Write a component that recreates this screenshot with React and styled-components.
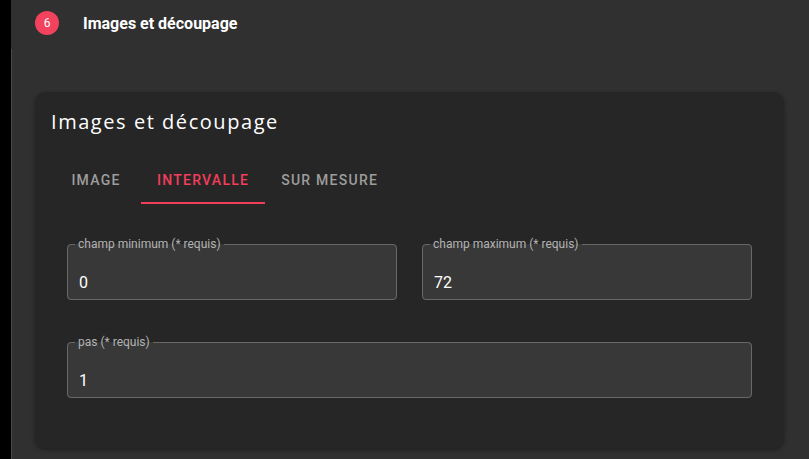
import React, { useState } from "react";
import styled, { createGlobalStyle } from "styled-components";

const GlobalStyle = createGlobalStyle`
    html, body {
        margin: 0;
        padding: 0;
        background: #303030;
        font-family: Roboto, "Liberation Sans", sans-serif;
    }
`;

// Styles
const Page = styled.div`
    display: flex;
    min-height: 459px;
`;
const Sidebar = styled.div`
    width: 11px;
    flex-shrink: 0;
    background: #000;
`;
const Main = styled.main`
    flex: 1;
    padding: 11px 25px 0 23px;
    border-left: 1px solid transparent;
    border-image: linear-gradient(to bottom, transparent 50px, #4a4a4a 50px) 1;
`;
const StepHeader = styled.div`
    display: flex;
    align-items: center;
    gap: 24px;
    margin-bottom: 57px;
`;
const Badge = styled.span`
    width: 24px;
    height: 24px;
    border-radius: 50%;
    background: #f2425d;
    color: #fff;
    font-size: 12px;
    display: flex;
    align-items: center;
    justify-content: center;
`;
const StepTitle = styled.span`
    color: #fff;
    font-size: 16px;
    font-weight: 700;
`;
const Card = styled.section`
    background: #262626;
    border-radius: 10px;
    padding: 16px;
    box-shadow: 0 2px 4px rgba(0, 0, 0, 0.35);
`;
const CardTitle = styled.h2`
    margin: 0 0 21px;
    color: #fff;
    font-family: "Open Sans", "Liberation Sans", sans-serif;
    font-weight: 500;
    font-size: 20px;
    line-height: 27px;
    letter-spacing: 1.55px;
`;
const TabList = styled.div`
    display: flex;
`;
const Tab = styled.button`
    min-width: 90px;
    height: 48px;
    padding: 0 16px;
    border: none;
    background: none;
    font-family: Roboto, "Liberation Sans", sans-serif;
    font-size: 14px;
    font-weight: 500;
    letter-spacing: 1.25px;
    text-transform: uppercase;
    color: ${p => (p.$active ? "#f23e5a" : "#9d9d9d")};
    border-bottom: 2px solid ${p => (p.$active ? "#f23e5a" : "transparent")};
    padding-top: 2px;
    cursor: pointer;
`;
const Panel = styled.div`
    display: grid;
    grid-template-columns: 1fr 1fr;
    column-gap: 25px;
    row-gap: 35px;
    padding: 33px 16px 34px;
`;
const Field = styled.fieldset`
    grid-column: ${p => (p.$wide ? "1 / -1" : "auto")};
    margin: 0;
    min-width: 0;
    padding: 0 11px;
    border: 1px solid #686868;
    border-radius: 4px;
    background: #383838;
`;
const Legend = styled.legend`
    margin-left: -4px;
    padding: 0 3px;
    font-size: 12px;
    line-height: 14px;
    color: #b3b3b3;
`;
const Value = styled.div`
    padding: 22px 0 7px;
    font-size: 16px;
    line-height: 19px;
    color: #fff;
`;

const tabs = ["Image", "Intervalle", "Sur mesure"];

const fields = [
    { label: "champ minimum (* requis)", value: "0" },
    { label: "champ maximum (* requis)", value: "72" },
    { label: "pas (* requis)", value: "1", wide: true },
];

function App() {
    const [tab, setTab] = useState(1);

    return (
        <Page>
            <GlobalStyle />
            <Sidebar />
            <Main>
                <StepHeader>
                    <Badge>6</Badge>
                    <StepTitle>Images et découpage</StepTitle>
                </StepHeader>
                <Card>
                    <CardTitle>Images et découpage</CardTitle>
                    <TabList>
                        {tabs.map((t, i) => (
                            <Tab key={t} $active={i === tab} onClick={() => setTab(i)}>
                                {t}
                            </Tab>
                        ))}
                    </TabList>
                    <Panel>
                        {fields.map(f => (
                            <Field key={f.label} $wide={f.wide}>
                                <Legend>{f.label}</Legend>
                                <Value>{f.value}</Value>
                            </Field>
                        ))}
                    </Panel>
                </Card>
            </Main>
        </Page>
    );
}

export default App;
